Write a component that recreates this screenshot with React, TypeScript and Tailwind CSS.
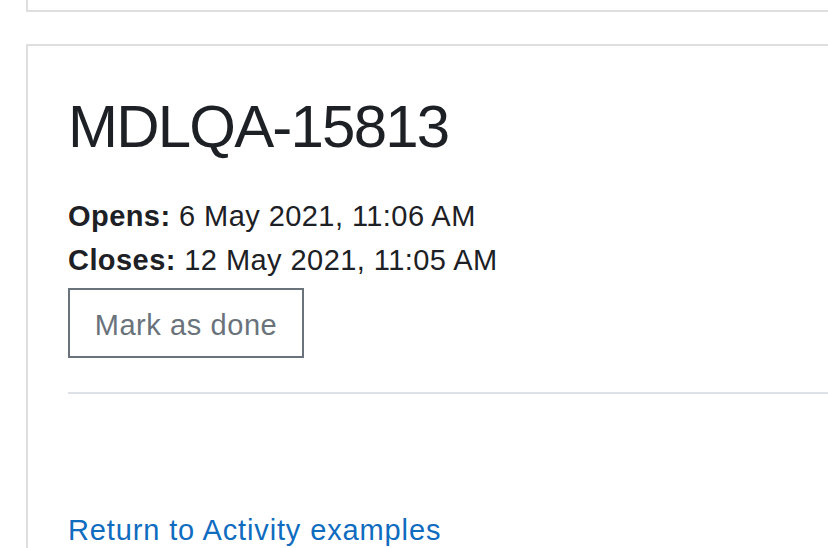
export default function App() {
  return (
    <div className="w-[828px] h-[548px] overflow-hidden bg-white font-['Liberation_Sans',Arial,sans-serif] text-[#1d2125]">
      <div className="ml-[26px] w-[900px] h-[12px] border-l-2 border-b-2 border-[#dfdfdf]" />
      <div className="mt-[32px] ml-[26px] w-[900px] h-[600px] border-l-2 border-t-2 border-[#dfdfdf] pt-[45px] pl-[40px]">
        <h2 className="text-[60px] leading-[72px] tracking-[-0.03em] font-normal">MDLQA-15813</h2>
        <div className="mt-[31px] text-[29px] leading-[44px] tracking-[0.015em]">
          <div>
            <strong className="font-bold">Opens:</strong> 6 May 2021, 11:06 AM
          </div>
          <div>
            <strong className="font-bold">Closes:</strong> 12 May 2021, 11:05 AM
          </div>
        </div>
        <button className="mt-[6px] w-[236px] h-[70px] pt-[4px] border-2 border-[#6a737b] text-[#6a737b] text-[29px] leading-[40px] tracking-[0.02em] flex items-center justify-center bg-white">
          Mark as done
        </button>
        <div className="mt-[34px] h-[2px] bg-[#dee2e6]" />
        <a href="#" className="block mt-[116px] text-[29px] leading-[40px] tracking-[0.03em] text-[#0f6cbf]">
          Return to Activity examples
        </a>
      </div>
    </div>
  );
}
